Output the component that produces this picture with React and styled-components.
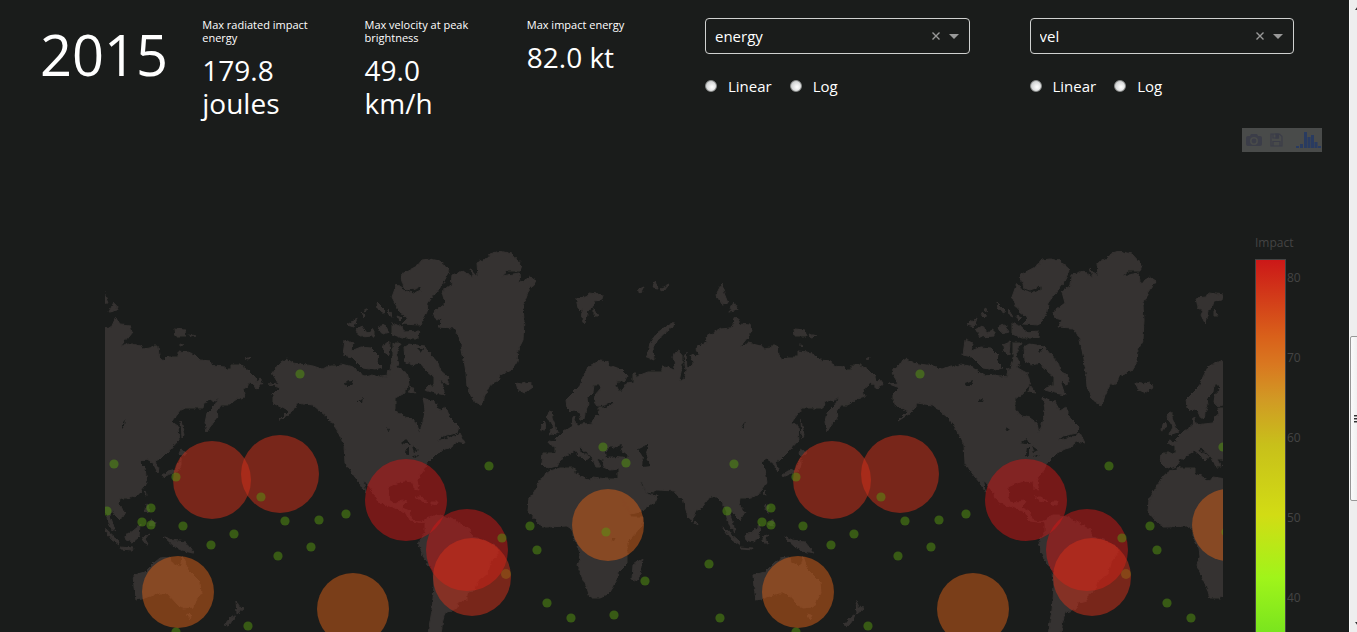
import React from "react";
import styled, { createGlobalStyle } from "styled-components";

const GlobalStyle = createGlobalStyle`
  * { box-sizing: border-box; }
  body {
    margin: 0;
    background: #1a1c1b;
    color: #fff;
    font-family: "Open Sans", "Noto Sans", sans-serif;
  }
`;

const Page = styled.div`
  display: flex;
  height: 100vh;
  overflow: hidden;
`;

const Main = styled.main`
  flex: 1;
  min-width: 0;
  display: flex;
  flex-direction: column;
`;

const Header = styled.header`
  display: grid;
  grid-template-columns: repeat(4, minmax(0, 1fr)) repeat(2, minmax(0, 2fr));
  min-height: 128px;
  padding: 18px 11px 0 40px;
`;

const Year = styled.h1`
  margin: 0;
  font-size: 56px;
  line-height: 72px;
  font-weight: 400;
`;

const Stat = styled.section`
  padding-right: 40px;
`;

const StatLabel = styled.h2`
  margin: 0 0 10px;
  font-size: 11px;
  line-height: 13px;
  font-weight: 400;
`;

const StatValue = styled.p`
  margin: 0;
  font-size: 28px;
  line-height: 33px;
`;

const AxisControl = styled.section`
  padding: 0 44px 0 16px;
`;

const SelectBox = styled.div`
  display: flex;
  align-items: center;
  height: 36px;
  padding: 0 10px 0 9px;
  border: 1px solid #d0d1d0;
  border-radius: 4px;
`;

const Select = styled.select`
  flex: 1;
  min-width: 0;
  height: 34px;
  padding: 0;
  border: 0;
  appearance: none;
  background: transparent;
  color: #fff;
  font: 15px "Open Sans", sans-serif;
`;

const ClearButton = styled.button`
  display: flex;
  padding: 0;
  margin-right: 8px;
  border: 0;
  background: none;
  color: #999;
`;

const Choices = styled.div`
  display: flex;
  gap: 18px;
  margin-top: 21px;
`;

const Choice = styled.label`
  display: flex;
  align-items: center;
  gap: 11px;
  font-size: 15px;
  line-height: 22px;
`;

const Radio = styled.input`
  appearance: none;
  width: 12px;
  height: 12px;
  margin: 0;
  border: 1px solid #8b8d8c;
  border-radius: 50%;
  background: radial-gradient(circle at 60% 60%, #fafafa 10%, #c8cacb 80%);
`;

const Modebar = styled.div`
  display: flex;
  align-items: center;
  align-self: flex-end;
  width: 80px;
  height: 24px;
  margin-right: 27px;
  padding-left: 4px;
  background: #494b4a;
`;

const ModeButton = styled.button`
  display: flex;
  padding: 0;
  margin-right: ${(p) => (p.$gap ? p.$gap : 0)}px;
  border: 0;
  background: none;
  color: ${(p) => (p.$brand ? "#293b60" : "#3b3d48")};
`;

const Plot = styled.section`
  flex: 1;
  display: flex;
  min-height: 0;
  padding-left: 105px;
  overflow: hidden;
`;

const MapSvg = styled.svg`
  flex: 1;
  min-width: 0;
  height: 100%;
`;

const Legend = styled.div`
  width: 126px;
  padding: 82px 0 0 32px;
  color: #444;
  font-size: 12px;
`;

const LegendTitle = styled.div`
  line-height: 18px;
  margin-bottom: 7px;
`;

const Scale = styled.div`
  display: flex;
  gap: 1px;
`;

const ColorRamp = styled.div`
  width: 31px;
  height: 400px;
  border: 1px solid #444;
  background: linear-gradient(
    #cc1818 0,
    #d9601a 76px,
    #d97820 105px,
    #d19a24 140px,
    #c8c01a 185px,
    #d2dc14 255px,
    #a0f41a 318px,
    #78e41e 375px
  );
`;

const Ticks = styled.div`
  padding-top: 9px;
`;

const Tick = styled.div`
  height: 80px;
  line-height: 20px;
`;

const ScrollBar = styled.aside`
  width: 8px;
  overflow: hidden;
  display: flex;
  flex-direction: column;
  border-left: 1px solid #fafafa;
  background: #eee;
`;

const Arrow = styled.svg`
  flex: none;
  width: 17px;
  height: 17px;
`;

const TrackSpace = styled.div`
  flex: ${(p) => p.$grow};
`;

const Thumb = styled.div`
  flex: none;
  display: flex;
  flex-direction: column;
  justify-content: center;
  gap: 1px;
  width: 16px;
  height: 165px;
  padding-left: 3px;
  border: 1px solid #979797;
  border-radius: 2px;
  background: linear-gradient(90deg, #fafafa, #e4e4e4);
`;

const Grip = styled.span`
  width: 8px;
  height: 2px;
  border-top: 1px solid #333;
  background: #999;
`;

const WORLD_WIDTH = 620;

const LAND = [
  // Europe, Asia and Africa
  "M542 453L555 453L555 447L548 443L549 441L557 442L556 439L564 431L572 426L573 417L575 416L574 421L577 425L583 424L593 423L595 417L599 415L598 408L605 408L614 403L612 401L605 405L597 406L594 402L595 395L601 388L600 385L594 385L593 392L587 398L588 405L585 413L584 419L581 419L578 412L575 409L570 411L567 408L566 400L573 393L579 387L583 377L588 367L593 364L600 361L608 362L609 365L620 369L627 376L625 381L617 381L616 385L619 391L622 391L627 383L633 382L633 373L636 373L636 378L640 375L648 372L662 372L662 366L665 366L674 370L675 367L673 357L675 352L679 350L682 356L682 367L679 382L685 377L686 370L684 357L686 353L687 368L693 364L691 355L700 356L696 350L698 346L707 343L706 337L713 333L720 329L731 328L736 317L740 324L750 325L752 332L740 347L748 343L761 346L763 349L770 348L771 346L778 346L779 356L783 361L787 357L798 357L798 351L807 352L815 355L820 360L831 361L833 366L845 367L846 370L851 370L851 365L860 365L868 370L875 377L876 382L880 379L883 383L878 389L870 382L867 387L863 389L865 397L857 399L848 405L841 405L837 412L838 417L830 427L827 432L825 423L827 413L835 405L839 397L833 402L830 400L824 403L823 408L803 408L797 415L792 422L798 426L799 440L787 453L780 460L775 462L779 469L778 473L773 463L767 459L760 463L765 468L767 483L758 495L747 498L740 498L739 505L745 512L740 520L735 515L732 510L730 515L733 524L735 531L731 528L727 518L726 513L722 502L717 497L710 497L700 510L695 512L692 521L688 518L683 498L678 497L675 491L657 490L653 493L646 492L642 482L640 482L646 493L650 495L658 496L655 503L640 512L631 514L623 505L617 492L616 487L619 492L632 517L643 517L642 527L627 543L627 563L618 572L617 580L607 595L600 598L590 598L587 588L582 577L577 565L580 557L579 548L573 537L573 530L567 526L547 527L543 527L537 522L528 512L529 500L542 477L550 471L560 468L575 468L575 473L590 481L593 477L606 479L618 479L618 469L610 470L603 467L604 459L597 459L601 467L596 467L592 458L580 447L579 450L589 457L586 461L583 458L574 451L567 455L560 460L557 466L549 468L544 466L541 463Z",
  // North and South America
  "M287 359L293 363L313 366L322 369L330 366L337 366L341 364L353 367L360 373L365 376L373 374L380 377L388 376L393 358L398 368L403 371L407 373L410 383L405 390L405 393L395 398L395 410L402 416L410 418L417 423L419 433L423 422L425 410L423 398L435 402L440 411L446 407L450 418L459 427L457 433L443 436L437 441L455 436L460 433L465 443L455 441L452 447L445 449L437 453L427 463L424 470L417 480L419 490L414 489L413 482L404 481L397 483L388 487L389 500L395 504L403 500L406 501L402 508L410 511L412 520L420 522L433 516L439 516L447 517L455 521L470 530L473 537L484 540L497 547L498 553L490 563L488 573L477 582L475 590L467 594L467 600L458 602L457 608L445 613L443 620L440 640L427 640L432 610L434 587L433 570L425 560L418 543L425 533L425 523L410 521L405 512L392 507L378 502L373 492L363 480L366 493L360 483L355 477L345 463L344 445L337 430L330 420L327 417L313 405L304 404L297 403L292 412L278 421L286 413L288 411L273 403L273 395L280 388L269 384L278 383L272 373L278 365Z",
  // Greenland
  "M433 312L445 303L442 292L451 285L452 275L463 271L473 278L470 268L478 277L477 263L487 258L490 254L500 251L512 254L522 265L520 271L508 271L502 276L519 273L520 283L530 277L536 281L528 292L523 305L524 320L523 340L518 350L517 362L512 370L500 375L497 382L490 385L485 395L482 406L473 400L467 387L466 373L464 360L462 350L460 340L456 332L453 328L438 327L442 320L435 318Z",
  // Canadian Arctic
  "M400 275L417 266L422 260L430 259L440 261L450 270L442 285L428 303L427 312L420 325L402 324L408 318L400 312L397 307L392 297L397 283L403 290L414 293L421 290L421 286L410 290L404 288Z",
  "M404 347L409 344L424 346L430 354L438 363L440 370L449 378L447 385L440 380L445 395L435 393L425 390L428 386L434 386L434 377L427 371L420 363L412 365L405 361Z",
  "M345 340L353 343L351 351L361 347L371 348L378 355L377 362L383 368L375 370L363 368L352 357L343 355Z",
  "M347 325L357 318L354 327Z",
  "M356 330L362 326L367 333L374 329L374 336L360 337Z",
  "M378 327L385 325L389 332L382 334Z",
  "M377 302L385 310L384 313L378 309Z",
  "M392 323L402 327L404 332L419 331L418 338L402 338L392 334Z",
  "M383 345L390 342L389 355L384 352Z",
  "M393 343L401 343L396 353L399 365L393 366Z",
  "M410 385L416 393L409 392ZM388 309L393 317L389 315ZM361 313L366 315L364 318ZM365 308L368 310L365 312ZM397 316L402 318L399 321ZM388 368L392 375L387 375Z",
  // British Isles and Iceland
  "M549 412L552 413L552 417L558 432L549 435L553 427L547 417ZM545 422L546 428L541 431L542 425Z",
  "M516 383L522 384L530 382L533 387L525 393L518 390Z",
  // Arctic Ocean
  "M576 298L587 297L589 293L603 295L602 300L594 301L592 308L588 311L585 323L581 315L583 311L578 308ZM594 309L598 316L594 316Z",
  "M637 290L644 287L641 293ZM652 287L656 280L658 288ZM660 289L668 285L663 291Z",
  "M674 322L673 327L660 337L653 347L654 360L647 357L650 343L657 333L665 327Z",
  "M722 283L724 293L728 303L722 304L716 295ZM734 302L738 310L729 312Z",
  "M794 329L805 330L806 336L795 336ZM809 334L816 336L811 337ZM865 359L870 357L869 360ZM800 344L803 345L800 346Z",
  // Japan and the seas south of it
  "M801 449L807 453L801 456L799 454ZM801 458L801 466L798 471L790 474L783 477L782 475L788 471L796 469ZM801 420L804 435L802 438ZM765 491L766 495L764 494Z",
  "M766 504L769 506L768 513L765 510ZM771 520L775 522L774 526L769 525Z",
  "M722 527L726 529L740 542L739 545L732 540ZM740 547L753 548L752 550L741 549ZM745 536L753 531L760 525L759 537L753 542L746 540ZM763 537L769 534L765 539L768 544L763 542Z",
  "M784 537L792 540L805 542L814 553L803 551L795 547Z",
  "M695 520L697 525L694 523ZM643 558L642 567L638 581L632 579L633 565Z",
  // Australia and New Zealand
  "M753 575L765 572L774 563L780 558L790 557L791 562L800 567L803 556L808 570L820 582L821 593L813 607L803 608L798 605L787 593L779 593L770 596L762 599L756 600L754 587ZM807 614L812 615L810 619Z",
  "M856 601L859 607L864 608L857 614ZM855 614L853 620L848 626L844 625L850 618Z",
  // Caribbean
  "M415 497L421 497L428 502L422 501ZM431 502L438 502L437 505L431 504Z",
];

const WATER = [
  "M605 452L611 446L614 449L622 444L621 450L629 456L626 458L617 457L606 458Z",
  "M638 449L648 444L646 453L650 466L642 467L643 457Z",
  "M742 427L746 420L745 425L742 429Z",
  "M401 443L406 439L411 444L406 444ZM407 447L409 447L409 456L406 455ZM412 446L418 450L414 452ZM413 456L420 455L415 458Z",
  "M345 383L353 380L351 386L346 386ZM357 402L363 398L362 402ZM386 427L390 430L388 431ZM418 349L423 349L421 352Z",
  "M611 537L616 537L614 541L611 540Z",
];

const SMALL_IMPACTS = [
  [114, 464], [107, 511], [151, 508], [142, 522], [151, 525], [176, 477],
  [183, 526], [211, 545], [234, 534], [261, 497], [285, 521], [278, 556],
  [311, 547], [319, 520], [346, 514], [300, 374], [248, 626], [176, 632],
  [489, 466], [502, 538], [530, 526], [537, 550], [547, 603], [571, 618],
  [614, 615], [645, 581], [709, 564], [720, 618], [603, 447], [626, 463],
  [606, 532],
];

const LARGE_IMPACTS = [
  [212, 480, 39, "#d63019"],
  [280, 474, 39, "#d63019"],
  [178, 592, 36, "#da6018"],
  [353, 609, 36, "#da6018"],
  [406, 500, 41, "#d01616"],
  [467, 550, 41, "#d01616"],
  [506, 574, 5, "#56980f"],
  [472, 577, 39, "#d63019"],
  [608, 525, 36, "#da6018"],
];

function WorldMap() {
  const copies = [-1, 0, 1, 2, 3];
  return (
    <MapSvg role="img" aria-label="Impact map">
      <defs>
        <filter id="coast" x="0" y="0" width="100%" height="100%" colorInterpolationFilters="sRGB">
          <feTurbulence type="fractalNoise" baseFrequency="0.22" numOctaves="3" seed="4" result="noise" />
          <feDisplacementMap in="SourceGraphic" in2="noise" scale="4" xChannelSelector="R" yChannelSelector="G" />
        </filter>
        <g id="world">
          <path d={LAND.join("")} fill="#353231" stroke="#353231" strokeWidth="1" />
          <path d={WATER.join("")} fill="#1a1c1b" />
        </g>
        <g id="impacts" fillOpacity="0.5">
          {LARGE_IMPACTS.map(([x, y, r, color]) => (
            <circle key={`${x}-${y}`} cx={x} cy={y} r={r} fill={color} />
          ))}
          {SMALL_IMPACTS.map(([x, y]) => (
            <circle key={`${x}-${y}`} cx={x} cy={y} r="4.6" fill="#56980f" />
          ))}
        </g>
      </defs>
      <g transform="translate(-105 -152)">
        <g filter="url(#coast)">
          {copies.map((n) => (
            <use key={n} href="#world" x={n * WORLD_WIDTH} />
          ))}
        </g>
        {copies.map((n) => (
          <use key={n} href="#impacts" x={n * WORLD_WIDTH} />
        ))}
      </g>
    </MapSvg>
  );
}

function AxisPicker({ name, value }) {
  return (
    <AxisControl>
      <SelectBox>
        <Select aria-label={`${name} axis`} defaultValue={value}>
          <option value={value}>{value}</option>
        </Select>
        <ClearButton type="button" aria-label="Clear">
          <svg width="10" height="10" viewBox="0 0 10 10" stroke="currentColor" strokeWidth="1.4">
            <path d="M1.5 1.5L8.5 8.5M8.5 1.5L1.5 8.5" />
          </svg>
        </ClearButton>
        <svg width="10" height="6" viewBox="0 0 10 6" fill="#999">
          <path d="M0 1H10L5 6Z" />
        </svg>
      </SelectBox>
      <Choices>
        {["Linear", "Log"].map((label) => (
          <Choice key={label}>
            <Radio type="radio" name={name} />
            {label}
          </Choice>
        ))}
      </Choices>
    </AxisControl>
  );
}

const STATS = [
  ["Max radiated impact energy", "179.8 joules"],
  ["Max velocity at peak brightness", "49.0 km/h"],
  ["Max impact energy", "82.0 kt"],
];

export default function App() {
  return (
    <Page>
      <GlobalStyle />
      <Main>
        <Header>
          <Year>2015</Year>
          {STATS.map(([label, value]) => (
            <Stat key={label}>
              <StatLabel>{label}</StatLabel>
              <StatValue>{value}</StatValue>
            </Stat>
          ))}
          <AxisPicker name="x" value="energy" />
          <AxisPicker name="y" value="vel" />
        </Header>
        <Modebar>
          <ModeButton type="button" aria-label="Camera" $gap={8}>
            <svg width="16" height="14" viewBox="0 0 16 14" fill="currentColor">
              <path fillRule="evenodd" d="M2 3H4L5 1H11L12 3H14Q16 3 16 5V11Q16 13 14 13H2Q0 13 0 11V5Q0 3 2 3ZM8 4A4 4 0 1 0 8 12A4 4 0 1 0 8 4ZM8 5.6A2.4 2.4 0 1 1 8 10.4A2.4 2.4 0 1 1 8 5.6Z" />
            </svg>
          </ModeButton>
          <ModeButton type="button" aria-label="Save" $gap={13}>
            <svg width="13" height="14" viewBox="0 0 13 14" fill="none" stroke="currentColor" strokeWidth="1.2">
              <path d="M1 1H9.5L12 3.5V13H1ZM3 13V8.5H10V13M3 1V5H8.5V1" />
              <path d="M6 1H8V5H6Z" fill="currentColor" />
            </svg>
          </ModeButton>
          <ModeButton type="button" aria-label="Plot" $brand>
            <svg width="25" height="18" viewBox="0 0 25 18" fill="currentColor">
              <path d="M0 15H3V17H0ZM4 13H7V17H4ZM8 1H11V17H8ZM11.5 6H14.5V17H11.5ZM15 4H18V17H15ZM18.5 11H21.5V17H18.5ZM22 15H25V17H22Z" />
            </svg>
          </ModeButton>
        </Modebar>
        <Plot>
          <WorldMap />
          <Legend>
            <LegendTitle>Impact</LegendTitle>
            <Scale>
              <ColorRamp />
              <Ticks>
                {[80, 70, 60, 50, 40].map((n) => (
                  <Tick key={n}>{n}</Tick>
                ))}
              </Ticks>
            </Scale>
          </Legend>
        </Plot>
      </Main>
      <ScrollBar aria-hidden="true">
        <Arrow viewBox="0 0 17 17"><path d="M5 10L8 6L11 10Z" fill="#333" /></Arrow>
        <TrackSpace $grow={319} />
        <Thumb><Grip /><Grip /><Grip /></Thumb>
        <TrackSpace $grow={114} />
        <Arrow viewBox="0 0 17 17"><path d="M5 7L8 11L11 7Z" fill="#333" /></Arrow>
      </ScrollBar>
    </Page>
  );
}
